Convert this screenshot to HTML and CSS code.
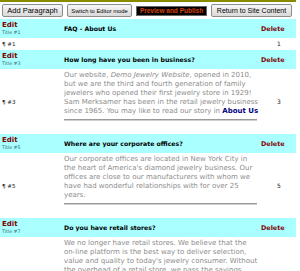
FILE: index.html
```html
<!DOCTYPE html>
<html lang="en">
<head>
  <meta charset="UTF-8" />
  <meta name="viewport" content="width=device-width, initial-scale=1.0"/>
  <title>FAQ - About Us</title>
  <link rel="stylesheet" href="styles.css">
</head>
<body>
  <div class="toolbar">
    <button class="btn btn-add">Add Paragraph</button>
    <button class="btn btn-switch">Switch to Editor mode</button>
    <button class="btn btn-preview">Preview and Publish</button>
    <button class="btn btn-return">Return to Site Content</button>
  </div>

  <table class="paras">
    <colgroup>
      <col class="col-side">
      <col class="col-text">
      <col class="col-num">
    </colgroup>

    <tr class="title-row">
      <td class="side"><a class="edit">Edit</a><span class="tag">Title #1</span></td>
      <td class="title">FAQ - About Us</td>
      <td class="del"><a>Delete</a></td>
    </tr>
    <tr class="para-row empty">
      <td class="side"><span class="mark">¶ #1</span></td>
      <td class="text"></td>
      <td class="num">1</td>
    </tr>

    <tr class="title-row">
      <td class="side"><a class="edit">Edit</a><span class="tag">Title #3</span></td>
      <td class="title">How long have you been in business?</td>
      <td class="del"><a>Delete</a></td>
    </tr>
    <tr class="para-row">
      <td class="side"><span class="mark">¶ #3</span></td>
      <td class="text">
        <p>Our website, <em>Demo Jewelry Website</em>, opened in 2010,<br>
        but we are the third and fourth generation of family<br>
        jewelers who opened their first jewelry store in 1929!<br>
        Sam Merksamer has been in the retail jewelry business<br>
        since 1965. You may like to read our story in <a class="link">About Us</a></p>
        <hr>
      </td>
      <td class="num">3</td>
    </tr>

    <tr class="title-row">
      <td class="side"><a class="edit">Edit</a><span class="tag">Title #5</span></td>
      <td class="title">Where are your corporate offices?</td>
      <td class="del"><a>Delete</a></td>
    </tr>
    <tr class="para-row">
      <td class="side"><span class="mark">¶ #5</span></td>
      <td class="text">
        <p>Our corporate offices are located in New York City in<br>
        the heart of America's diamond jewelry business. Our<br>
        offices are close to our manufacturers with whom we<br>
        have had wonderful relationships with for over 25<br>
        years.</p>
        <hr>
      </td>
      <td class="num">5</td>
    </tr>

    <tr class="title-row">
      <td class="side"><a class="edit">Edit</a><span class="tag">Title #7</span></td>
      <td class="title">Do you have retail stores?</td>
      <td class="del"><a>Delete</a></td>
    </tr>
    <tr class="para-row">
      <td class="side"><span class="mark">¶ #7</span></td>
      <td class="text">
        <p>We no longer have retail stores. We believe that the<br>
        on-line platform is the best way to deliver selection,<br>
        value and quality to today's jewelry consumer. Without<br>
        the overhead of a retail store, we pass the savings<br>
        directly on to you. Our prices are often far below<br>
        what you would pay at a traditional jewelry store,<br>
        and our selection is far larger.</p>
        <hr>
      </td>
      <td class="num">7</td>
    </tr>
  </table>
</body>
</html>
```

FILE: styles.css
```css
body {
  margin: 0;
  font-family: "DejaVu Sans", Verdana, sans-serif;
  background: #fff;
}

/* toolbar */
.toolbar {
  width: 296px;
  height: 19px;
  box-sizing: border-box;
  border-top: 2px solid #8a8a00;
  padding: 2px 0 2px 2px;
  display: flex;
  align-items: center;
  gap: 4px;
}
.btn {
  height: 13px;
  padding: 0;
  border: 1px solid #8c8c8c;
  border-radius: 2px;
  background: linear-gradient(#f6f6f6, #dadada);
  font-family: "Liberation Sans", Arial, sans-serif;
  color: #000;
  white-space: nowrap;
}
.btn-add {
  width: 61px;
  font-size: 7.5px;
}
.btn-switch {
  width: 65px;
  font-size: 5.8px;
}
.btn-preview {
  width: 71px;
  height: 10px;
  border-color: #666;
  border-radius: 0;
  background: #000;
  color: #d9400f;
  font-weight: bold;
  font-size: 6.5px;
}
.btn-return {
  width: 81px;
  font-size: 7px;
}

/* paragraph table */
.paras {
  width: 296px;
  table-layout: fixed;
  border-collapse: collapse;
  font-size: 6px;
  line-height: 8px;
}
.col-side { width: 64px; }
.col-text { width: 194px; }
.col-num { width: 38px; }
.paras td {
  padding: 0;
  vertical-align: middle;
}
.title-row {
  background: #aaffff;
  height: 19px;
}
.paras .side {
  padding-left: 2px;
}
.edit {
  display: block;
  font-weight: bold;
  font-size: 7px;
  line-height: 8px;
  color: #800000;
}
.tag {
  display: block;
  font-size: 4.7px;
  line-height: 8px;
  color: #336677;
}
.title {
  font-weight: bold;
  font-size: 6.2px;
  color: #000;
}
.paras .del {
  padding-left: 3px;
  font-weight: bold;
  font-size: 6.4px;
  color: #800000;
}
.mark {
  font-size: 5.6px;
  color: #222;
}
.paras .num {
  padding-left: 4px;
  text-align: center;
  font-size: 6px;
  color: #222;
}
.empty {
  height: 12px;
}
.paras .text {
  padding-top: 2px;
}
.text p {
  margin: 0;
  font-size: 7px;
  line-height: 9px;
  color: #8c8c8c;
  white-space: nowrap;
}
.link {
  font-weight: bold;
  color: #000080;
}
.text hr {
  height: 0;
  margin: 3px 1px 13px 0;
  border: 0;
  border-top: 1px solid #999;
  border-bottom: 1px solid #d0d0d0;
}
```
